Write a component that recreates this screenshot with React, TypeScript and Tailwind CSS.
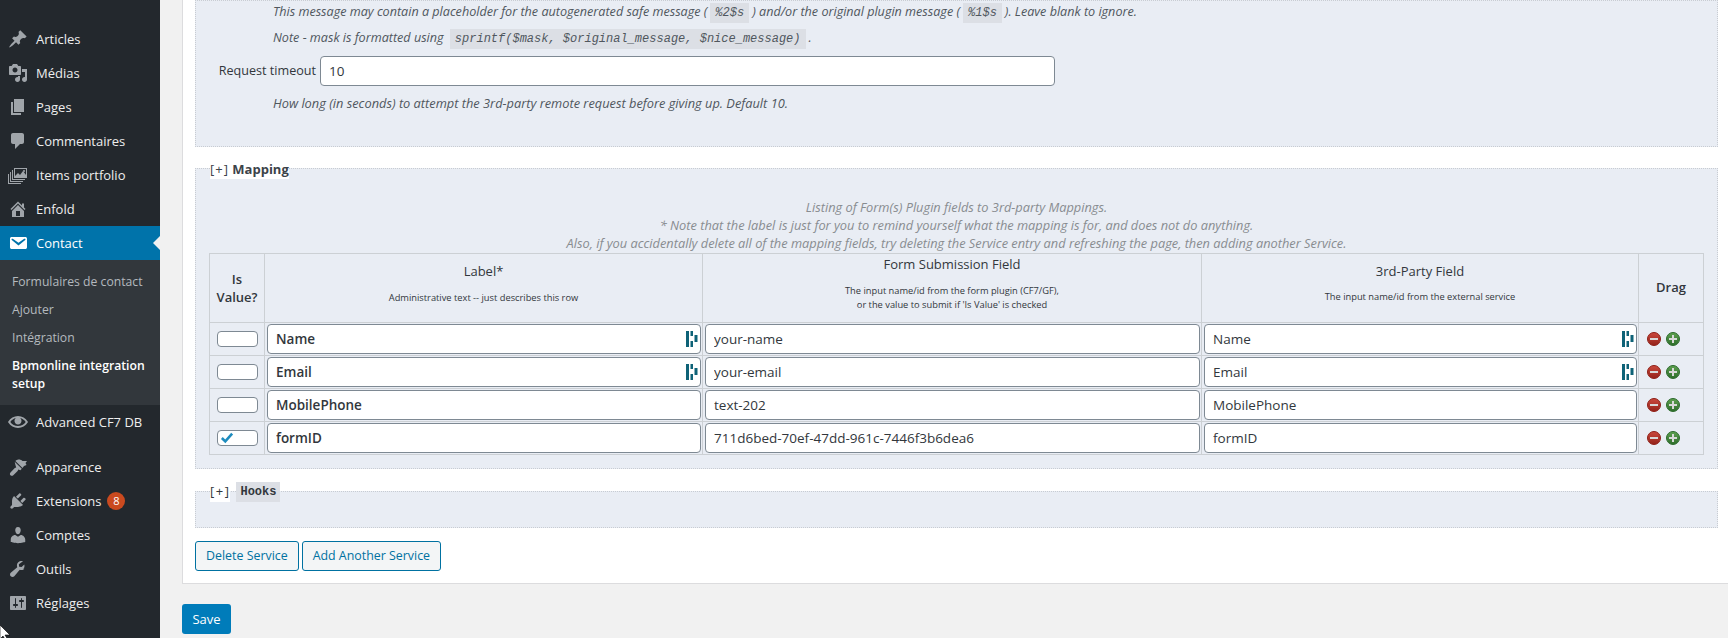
const ICONS: Record<string, string> = {
  post: "M10.44 3.02l1.82-1.82 6.36 6.35-1.83 1.82c-1.05-.68-2.48-.57-3.41.36l-.75.75c-.92.93-1.04 2.35-.35 3.41l-1.83 1.82-2.41-2.41-2.8 2.79c-.42.42-3.38 2.71-3.8 2.29s1.86-3.39 2.28-3.81l2.79-2.79L4.1 9.36l1.83-1.82c1.05.69 2.48.57 3.4-.36l.75-.75c.93-.92 1.05-2.35.36-3.41z",
  media: "M13 11V4c0-.55-.45-1-1-1h-1.67L9 1H5L3.67 3H2c-.55 0-1 .45-1 1v7c0 .55.45 1 1 1h10c.55 0 1-.45 1-1zM7 4.5c1.38 0 2.5 1.12 2.5 2.5S8.38 9.5 7 9.5 4.5 8.38 4.5 7 5.62 4.5 7 4.5zM14 6h5v10.5c0 1.38-1.12 2.5-2.5 2.5S14 17.88 14 16.5s1.12-2.5 2.5-2.5c.17 0 .34.02.5.05V9h-3V6zm-4 8.05V13h2v3.5c0 1.38-1.12 2.5-2.5 2.5S7 17.88 7 16.5 8.12 14 9.5 14c.17 0 .34.02.5.05z",
  page: "M6 15V2h10v13H6zm-1 1h8v2H3V5h2v11z",
  comment: "M5 2h9c1.1 0 2 .9 2 2v7c0 1.1-.9 2-2 2h-2l-5 5v-5H5c-1.1 0-2-.9-2-2V4c0-1.1.9-2 2-2z",
  portfolio: "M19 3v10H6V3h13zM7 4v7l3-3 2 2 3-4 3 4V4H7zm9 1a1 1 0 1 1-.01 0zM5 5v9h12v1H4V5h1zM3 7v9h12v1H2V7h1zM1 9v9h12v1H0V9h1z",
  home: "M16 8.5l1.53 1.53-1.06 1.06L10 4.62l-6.47 6.47-1.06-1.06L10 2.5l4 4v-2h2v4zm-6-2.46l6 5.99V18H4v-5.97zM12 17v-5H8v5h4z",
  email: "M3.87 4h13.25C18.37 4 19 4.59 19 5.79v8.43c0 1.19-.63 1.78-1.88 1.78H3.87c-1.25 0-1.88-.59-1.88-1.78V5.79c0-1.2.63-1.79 1.88-1.79zm6.62 8.6l6.74-5.53c.24-.2.43-.66.13-1.07-.29-.41-.82-.42-1.17-.17l-5.7 3.86L4.8 5.83c-.35-.25-.88-.24-1.17.17-.3.41-.11.87.13 1.07z",
  eye: "M19.7 9.4C17.7 6 14 3.9 10 3.9S2.3 6 .3 9.4L0 10l.3.6c2 3.4 5.7 5.5 9.7 5.5s7.7-2.1 9.7-5.5l.3-.6-.3-.6zM10 14.1c-3.1 0-6-1.6-7.7-4.1C3.6 8 5.7 6.6 8 6.1c-.9.6-1.5 1.7-1.5 2.9 0 1.9 1.6 3.5 3.5 3.5s3.5-1.6 3.5-3.5c0-1.2-.6-2.3-1.5-2.9 2.3.5 4.4 1.9 5.7 3.9-1.7 2.5-4.6 4.1-7.7 4.1z",
  brush: "M14.5 11.1L7.4 4c2-2 5.1-2 7.1 0l4.5 0-1.5 2 1 2-2.5 1zM6.7 4.7l7.1 7.1-1.4 1.4-2.1-.7-.7 1.4-4.3 4.3c-.8.8-2.1.8-2.8 0-.8-.7-.8-2 0-2.8l4.3-4.3 1.4-.7-.7-2.1z",
  plugin: "M13.11 4.36L9.87 7.6 8 5.73l3.24-3.24c.35-.34 1.05-.2 1.56.32.52.51.66 1.21.31 1.55zm-8 1.77l.91-1.12 9.01 9.01-1.19.84c-.71.71-2.63 1.16-3.82 1.16H6.14L4.9 17.26c-.59.59-1.54.59-2.12 0-.59-.58-.59-1.53 0-2.12l1.24-1.24v-3.88c0-1.13.4-3.19 1.09-3.89zm7.26 3.97l3.24-3.24c.34-.35 1.04-.21 1.55.31.52.51.66 1.21.31 1.55l-3.24 3.25z",
  users: "M10 9.25c-2.27 0-2.73-3.44-2.73-3.44C7 4.02 7.82 2 9.97 2c2.16 0 2.98 2.02 2.71 3.81 0 0-.41 3.44-2.68 3.44zm0 2.57L12.72 10c2.39 0 4.52 2.33 4.52 4.53v2.49s-3.65 1.13-7.24 1.13c-3.65 0-7.24-1.13-7.24-1.13v-2.49c0-2.25 1.94-4.48 4.47-4.48z",
  tools: "M16.68 9.77c-1.34 1.34-3.3 1.67-4.95.99l-5.41 6.52c-.99.99-2.59.99-3.57 0-.99-.98-.99-2.58 0-3.57l6.52-5.42c-.68-1.65-.35-3.61.99-4.95 1.28-1.28 3.12-1.64 4.72-1.11L10.88 5.3l.25 2.56 2.56.25 2.58-2.58c.53 1.6.17 3.44-1.11 4.72z",
  settings: "M18 16V4c0-.55-.45-1-1-1H3c-.55 0-1 .45-1 1v12c0 .55.45 1 1 1h14c.55 0 1-.45 1-1zM8 11h1c.55 0 1 .45 1 1s-.45 1-1 1H8v1.5c0 .28-.22.5-.5.5s-.5-.22-.5-.5V13H6c-.55 0-1-.45-1-1s.45-1 1-1h1V5.5c0-.28.22-.5.5-.5s.5.22.5.5V11zm5-2h-1c-.55 0-1-.45-1-1s.45-1 1-1h1V5.5c0-.28.22-.5.5-.5s.5.22.5.5V7h1c.55 0 1 .45 1 1s-.45 1-1 1h-1v5.5c0 .28-.22.5-.5.5s-.5-.22-.5-.5V9z",
};

function MenuIcon({ name, white }: { name: string; white?: boolean }) {
  return (
    <svg viewBox="0 0 20 20" className={`h-5 w-5 shrink-0 ${white ? "fill-white" : "fill-[#a0a5aa]"}`} fillRule="evenodd">
      <path d={ICONS[name]} />
    </svg>
  );
}

function MenuItem({ icon, label, badge }: { icon: string; label: string; badge?: string }) {
  return (
    <a className="flex h-[34px] items-center pl-2 text-[13px] text-[#eeeeee]">
      <MenuIcon name={icon} />
      <span className="ml-2 pt-[2px]">{label}</span>
      {badge && (
        <span className="ml-[6px] flex h-[18px] w-[18px] items-center justify-center rounded-full bg-[#ca4a1f] text-[11px] text-white">
          {badge}
        </span>
      )}
    </a>
  );
}

function Sidebar() {
  return (
    <aside className="w-40 shrink-0 bg-[#23282d] pt-[22px]">
      <MenuItem icon="post" label="Articles" />
      <MenuItem icon="media" label="Médias" />
      <MenuItem icon="page" label="Pages" />
      <MenuItem icon="comment" label="Commentaires" />
      <MenuItem icon="portfolio" label="Items portfolio" />
      <MenuItem icon="home" label="Enfold" />
      <a className="relative flex h-[34px] items-center bg-[#0073aa] pl-2 text-[13px] text-white">
        <MenuIcon name="email" white />
        <span className="ml-2 pt-[2px]">Contact</span>
        <span className="absolute right-0 top-[10px] border-y-[7px] border-r-[7px] border-y-transparent border-r-[#f1f1f1]" />
      </a>
      <div className="flex h-[145px] flex-col bg-[#32373c] pt-2 pl-3 text-[12.2px] text-[#b4b9be]">
        <a className="h-7 leading-7">Formulaires de contact</a>
        <a className="h-7 leading-7">Ajouter</a>
        <a className="h-7 leading-7">Intégration</a>
        <a className="pt-[5px] leading-[18px] font-semibold text-white">Bpmonline integration setup</a>
      </div>
      <div className="mb-[11px]">
        <MenuItem icon="eye" label="Advanced CF7 DB" />
      </div>
      <MenuItem icon="brush" label="Apparence" />
      <MenuItem icon="plugin" label="Extensions" badge="8" />
      <MenuItem icon="users" label="Comptes" />
      <MenuItem icon="tools" label="Outils" />
      <MenuItem icon="settings" label="Réglages" />
    </aside>
  );
}

function Chip({ children }: { children: string }) {
  return <code className="mx-[3px] bg-[#dcdfe5] px-[5px] py-[3px] font-['Liberation_Mono',monospace] text-[12px]">{children}</code>;
}

function Dashlane() {
  return (
    <svg viewBox="0 0 12 16" className="absolute right-[3px] top-[7px] h-4 w-3 fill-[#0e6277]">
      <rect x="0" y="0" width="3" height="16" />
      <rect x="4.5" y="0" width="2.5" height="5" />
      <rect x="4.5" y="10" width="2.5" height="6" />
      <rect x="8.5" y="4" width="3" height="7" />
    </svg>
  );
}

function TextInput({ value, bold, icon }: { value: string; bold?: boolean; icon?: boolean }) {
  return (
    <div className="relative">
      <input
        readOnly
        value={value}
        className={`block h-[30px] w-full rounded border border-[#7e8993] bg-white px-2 text-[13.5px] text-[#32373c] ${bold ? "font-semibold" : ""}`}
      />
      {icon && <Dashlane />}
    </div>
  );
}

const ROWS = [
  { label: "Name", field: "your-name", third: "Name", icon: true },
  { label: "Email", field: "your-email", third: "Email", icon: true },
  { label: "MobilePhone", field: "text-202", third: "MobilePhone" },
  { label: "formID", field: "711d6bed-70ef-47dd-961c-7446f3b6dea6", third: "formID", checked: true },
];

function RoundButton({ add }: { add?: boolean }) {
  return (
    <span
      className={`flex h-[14px] w-[14px] items-center justify-center rounded-full border bg-gradient-to-b ${
        add ? "border-[#2d6b2d] from-[#5d9f4f] to-[#2f6f2c]" : "border-[#8f2018] from-[#c9473c] to-[#96231b]"
      }`}
    >
      <span className="relative block h-[2px] w-2 bg-[#d8d8d8]">
        {add && <span className="absolute left-[3px] top-[-3px] block h-2 w-[2px] bg-[#d8d8d8]" />}
      </span>
    </span>
  );
}

function MappingTable() {
  const th = "border border-[#ccd0d4] text-center text-[#32373c] align-middle";
  const td = "border border-[#ccd0d4] pl-[2px] pr-[1px] align-middle";
  return (
    <table className="w-[1494px] table-fixed border-collapse text-[13px]">
      <colgroup>
        <col className="w-[55px]" />
        <col className="w-[438px]" />
        <col className="w-[499px]" />
        <col className="w-[437px]" />
        <col className="w-[65px]" />
      </colgroup>
      <thead>
        <tr className="h-[69px]">
          <th className={`${th} font-semibold leading-[18px]`}>Is Value?</th>
          <th className={`${th} pb-[9px] font-normal`}>
            <div>Label*</div>
            <div className="mt-[9px] text-[9.3px]">Administrative text -- just describes this row</div>
          </th>
          <th className={`${th} pb-[9px] font-normal`}>
            <div className="font-medium">Form Submission Field</div>
            <div className="mt-[9px] text-[9.3px] leading-[14px]">
              The input name/id from the form plugin (CF7/GF),
              <br />
              or the value to submit if 'Is Value' is checked
            </div>
          </th>
          <th className={`${th} pb-[10px] font-normal`}>
            <div className="font-medium">3rd-Party Field</div>
            <div className="mt-[9px] text-[9.3px]">The input name/id from the external service</div>
          </th>
          <th className={`${th} font-semibold`}>Drag</th>
        </tr>
      </thead>
      <tbody>
        {ROWS.map((row) => (
          <tr key={row.label} className="h-[33px]">
            <td className={td}>
              <span className="relative mx-auto block h-4 w-[41px] rounded border border-[#7e8993] bg-white">
                {row.checked && (
                  <svg viewBox="0 0 16 14" className="absolute left-[2px] top-[1px] h-3 w-[14px]">
                    <path d="M2 7l4 4 8-9" fill="none" stroke="#1e8cbe" strokeWidth="3" />
                  </svg>
                )}
              </span>
            </td>
            <td className={td}>
              <TextInput value={row.label} bold icon={row.icon} />
            </td>
            <td className={td}>
              <TextInput value={row.field} />
            </td>
            <td className={td}>
              <TextInput value={row.third} icon={row.icon} />
            </td>
            <td className={td}>
              <div className="flex gap-[5px] pl-[6px]">
                <RoundButton />
                <RoundButton add />
              </div>
            </td>
          </tr>
        ))}
      </tbody>
    </table>
  );
}

function Settings() {
  return (
    <section className="h-[147px] border border-dotted border-[#c8ccd2] bg-[#e9edf4] pt-px pl-[77px] text-[12.6px] italic text-[#50575e]">
      <p className="leading-5">
        This message may contain a placeholder for the autogenerated safe message (<Chip>%2$s</Chip>) and/or the
        original plugin message (<Chip>%1$s</Chip>). Leave blank to ignore.
      </p>
      <p className="mt-[5px] leading-5">
        Note - mask is formatted using <Chip>sprintf($mask, $original_message, $nice_message)</Chip>.
      </p>
      <div className="-ml-[77px] mt-[7px] flex items-center not-italic text-[#32373c]">
        <label className="w-[124px] pr-[4px] text-right">Request timeout</label>
        <input
          readOnly
          value="10"
          className="h-[30px] w-[735px] rounded border border-[#7e8993] bg-white px-2 text-[13.5px] text-[#32373c]"
        />
      </div>
      <p className="mt-[7px] text-[12.8px] leading-5">How long (in seconds) to attempt the 3rd-party remote request before giving up. Default 10.</p>
    </section>
  );
}

function Mapping() {
  return (
    <section className="relative mt-[21px] h-[301px] border border-dotted border-[#c8ccd2] bg-[#e9edf4] pt-[29px] pl-[13px]">
      <div className="absolute left-[14px] top-[-10px] bg-white text-[13px] leading-5 font-bold text-[#3c434a]">
        <span className="font-normal tracking-[1px]">[+]</span> Mapping
      </div>
      <div className="mb-[1px] pr-[13px] text-center text-[12.8px] italic leading-[18px] text-[#888c90]">
        <p>Listing of Form(s) Plugin fields to 3rd-party Mappings.</p>
        <p>* Note that the label is just for you to remind yourself what the mapping is for, and does not do anything.</p>
        <p>
          Also, if you accidentally delete all of the mapping fields, try deleting the Service entry and refreshing the
          page, then adding another Service.
        </p>
      </div>
      <MappingTable />
    </section>
  );
}

function Hooks() {
  return (
    <section className="relative mt-[22px] h-[37px] border border-dotted border-[#c8ccd2] bg-[#e9edf4]">
      <div className="absolute left-[14px] top-[-10px] flex items-center text-[13px] text-[#32373c]">
        <span className="bg-white tracking-[1.5px]">[+]</span>
        <code className="ml-[6px] bg-[#dcdfe5] px-[4px] py-[1px] font-['Liberation_Mono',monospace] text-[12px] leading-[18px] font-bold">Hooks</code>
      </div>
    </section>
  );
}

function OutlineButton({ children }: { children: string }) {
  return (
    <button className="h-[30px] rounded-[3px] border border-[#0071a1] bg-[#f3f5f6] px-[10px] text-[12.4px] text-[#0071a1]">
      {children}
    </button>
  );
}

export default function App() {
  return (
    <div className="relative flex h-[638px] overflow-hidden bg-[#f1f1f1] font-['Open_Sans',sans-serif]">
      <Sidebar />
      <main className="min-w-0 flex-1 pl-[22px]">
        <div className="h-[584px] border-b border-l border-[#dcdcde] bg-white pl-3 pr-[10px]">
          <Settings />
          <Mapping />
          <Hooks />
          <div className="mt-[13px] flex gap-[3px]">
            <OutlineButton>Delete Service</OutlineButton>
            <OutlineButton>Add Another Service</OutlineButton>
          </div>
        </div>
        <button className="mt-[20px] h-[30px] w-[49px] rounded-[3px] bg-[#007cba] pt-px text-[13px] text-white">Save</button>
      </main>
      <svg viewBox="0 0 12 16" className="absolute left-0 top-[625px] h-4 w-3">
        <path d="M0 0l10 10H5l3 5-2 1-3-5-3 3z" fill="#fff" stroke="#000" strokeWidth=".6" />
      </svg>
    </div>
  );
}
